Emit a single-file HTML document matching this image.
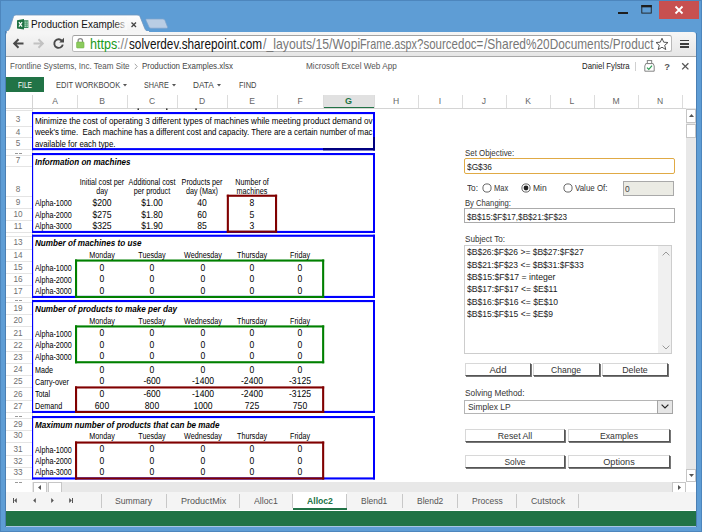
<!DOCTYPE html>
<html><head><meta charset="utf-8"><title>Production Examples.xlsx</title>
<style>
html,body{margin:0;padding:0;}
body{width:702px;height:532px;position:relative;overflow:hidden;background:#5e9dd5;font-family:"Liberation Sans",sans-serif;}
div,svg{position:absolute;box-sizing:border-box;}
.t{position:absolute;white-space:pre;line-height:1;}

.btn{background:#fff;border:1px solid;border-color:#d8d8d8 #555 #555 #d8d8d8;box-shadow:1px 1px 0 #777;}
</style></head>
<body>
<div style="left:0px;top:0px;width:702px;height:532px;border:1px solid #4d86bd;"></div>
<div style="left:659px;top:1px;width:39.5px;height:17.5px;background:#c75050;"></div>
<svg style="left:659px;top:1px" width="40" height="18" viewBox="0 0 40 18"><path d="M16.5 5.5 L23.5 12.5 M23.5 5.5 L16.5 12.5" stroke="#fff" stroke-width="1.8" fill="none"/></svg>
<svg style="left:641px;top:5.4px" width="11.5" height="9" viewBox="0 0 12 10"><rect x="0.5" y="0.5" width="10.5" height="8.5" fill="none" stroke="#1e1e1e" stroke-width="1"/><rect x="0" y="0" width="11.5" height="2.6" fill="#1e1e1e"/></svg>
<div style="left:618px;top:12px;width:10px;height:2px;background:#1e1e1e;"></div>
<svg style="left:0;top:0" width="702" height="34" viewBox="0 0 702 34"><defs><linearGradient id="tg" x1="0" y1="0" x2="0" y2="1"><stop offset="0" stop-color="#fefefe"/><stop offset="1" stop-color="#f3f3f3"/></linearGradient></defs><path d="M146.5 19 L163 19 Q164.5 19 165 20.5 L167.5 27 Q168 28.2 166.5 28.2 L151 28.2 Q149.5 28.2 149 27 L146 20.3 Q145.5 19 146.5 19 Z" fill="#b9cde4" stroke="#7ea4cc" stroke-width="0.7"/><path d="M6 32 L6 31.5 C9 31 9.5 29 10.5 26 L13 18 C13.8 15.6 14.5 15 16.5 15 L137 15 C139 15 139.8 15.6 140.6 18 L144.6 28 C145.6 30.5 146.6 31.5 149.5 31.5 L149.5 32 Z" fill="url(#tg)" stroke="#6f94bd" stroke-width="0.8"/></svg>
<div style="left:6px;top:32px;width:690px;height:25px;background:linear-gradient(#f6f6f6,#e6e6e6);border-bottom:1px solid #a8a8a8;border-radius:3px 3px 0 0;"></div>
<div style="left:7px;top:31px;width:142px;height:2px;background:#f5f5f5;"></div>
<svg style="left:17px;top:19px" width="12" height="11" viewBox="0 0 12 11"><rect x="6" y="1.2" width="5.4" height="7.8" fill="#3a8d60"/><path d="M7.6 2.4h1.3v1.3h-1.3zM9.5 2.4h1.3v1.3h-1.3zM7.6 4.5h1.3v1.3h-1.3zM9.5 4.5h1.3v1.3h-1.3zM7.6 6.6h1.3v1.3h-1.3zM9.5 6.6h1.3v1.3h-1.3z" fill="#b5dcc4"/><path d="M0 1.2 L7 0 L7 10.6 L0 9.4 Z" fill="#1f7244"/><path d="M1.9 3.1 L5.1 7.6 M5.1 3.1 L1.9 7.6" stroke="#fff" stroke-width="1.2"/></svg>
<div style="left:114px;top:17px;width:13px;height:13px;z-index:3;background:linear-gradient(90deg,rgba(250,250,250,0),rgba(250,250,250,.9));"></div>
<svg style="left:130px;top:21px" width="8" height="8" viewBox="0 0 8 8"><path d="M1.5 1.5 L6 6 M6 1.5 L1.5 6" stroke="#444" stroke-width="1.3"/></svg>
<svg style="left:12px;top:37px" width="13" height="13" viewBox="0 0 13 13"><path d="M11.5 6.5 H3 M6.5 2.2 L2.2 6.5 L6.5 10.8" stroke="#4a4a4a" stroke-width="2" fill="none"/></svg>
<svg style="left:32px;top:37px" width="13" height="13" viewBox="0 0 13 13"><path d="M1.5 6.5 H10 M6.5 2.2 L10.8 6.5 L6.5 10.8" stroke="#c2c2c2" stroke-width="2" fill="none"/></svg>
<svg style="left:52px;top:37px" width="13" height="13" viewBox="0 0 13 13"><path d="M10.2 4.2 A4.3 4.3 0 1 0 10.8 7.6" stroke="#4a4a4a" stroke-width="1.9" fill="none"/><path d="M7.2 5.4 L12 5.4 L12 0.8 Z" fill="#4a4a4a"/></svg>
<div style="left:71.5px;top:35px;width:600.5px;height:17px;background:#fff;border:1px solid #b9b9b9;border-radius:2.5px;border-top-color:#a2a2a2;"></div>
<svg style="left:76px;top:37.4px" width="8.6" height="12" viewBox="0 0 9 12"><path d="M2.2 5.5 V3.6 A2.3 2.3 0 0 1 6.8 3.6 V5.5" stroke="#8a8a8a" stroke-width="1.3" fill="none"/><rect x="0.6" y="5" width="7.8" height="6.2" rx="0.8" fill="#8ccb5e" stroke="#6db33f" stroke-width="0.6"/></svg>
<svg style="left:655px;top:37px" width="14" height="14" viewBox="0 0 14 14"><path d="M7 1.2 L8.7 5.2 L13 5.5 L9.7 8.3 L10.8 12.6 L7 10.2 L3.2 12.6 L4.3 8.3 L1 5.5 L5.3 5.2 Z" fill="#fff" stroke="#555" stroke-width="1"/></svg>
<div style="left:680px;top:39.5px;width:9px;height:1.8px;background:#3c3c3c;"></div>
<div style="left:680px;top:42.9px;width:9px;height:1.8px;background:#3c3c3c;"></div>
<div style="left:680px;top:46.3px;width:9px;height:1.8px;background:#3c3c3c;"></div>
<div style="left:6px;top:57px;width:690px;height:469px;background:#fff;"></div>
<svg style="left:134px;top:63px" width="4" height="7" viewBox="0 0 4 7"><path d="M0.8 0.8 L3.2 3.5 L0.8 6.2" stroke="#999" stroke-width="0.9" fill="none"/></svg>
<div style="left:634.5px;top:62px;width:1px;height:9px;background:#d0d0d0;"></div>
<svg style="left:644px;top:60px" width="11" height="12" viewBox="0 0 11 12"><rect x="3.3" y="0.6" width="4.4" height="3" fill="none" stroke="#777" stroke-width="0.9"/><path d="M1.8 3.6 H9.2 L10.2 6 V11.2 H0.8 V6 Z" fill="#fff" stroke="#777" stroke-width="0.9"/><path d="M3 7.6 L4.8 9.4 L8 5.6" stroke="#2f9e55" stroke-width="1.2" fill="none"/></svg>
<svg style="left:681px;top:62px" width="9" height="9" viewBox="0 0 9 9"><path d="M1.2 1.2 L7.4 7.4 M7.4 1.2 L1.2 7.4" stroke="#555" stroke-width="1.3"/></svg>
<div style="left:6px;top:77px;width:38px;height:15.3px;background:#217346;"></div>
<svg style="left:122.5px;top:84.2px" width="4" height="2.4" viewBox="0 0 5 3"><path d="M0 0 H5 L2.5 3 Z" fill="#555"/></svg>
<svg style="left:171.9px;top:84.2px" width="4" height="2.4" viewBox="0 0 5 3"><path d="M0 0 H5 L2.5 3 Z" fill="#555"/></svg>
<svg style="left:217.1px;top:84.2px" width="4" height="2.4" viewBox="0 0 5 3"><path d="M0 0 H5 L2.5 3 Z" fill="#555"/></svg>
<div style="left:6px;top:107.5px;width:680px;height:1px;background:#d4d4d4;"></div>
<div style="left:323px;top:95px;width:51.5px;height:12px;background:#e1e1e1;"></div>
<div style="left:322.5px;top:106.6px;width:52.5px;height:1.2px;background:#217346;"></div>
<div style="left:76.5px;top:95px;width:1px;height:12.5px;background:#dcdcdc;"></div>
<div style="left:126.5px;top:95px;width:1px;height:12.5px;background:#dcdcdc;"></div>
<div style="left:176.5px;top:95px;width:1px;height:12.5px;background:#dcdcdc;"></div>
<div style="left:226.5px;top:95px;width:1px;height:12.5px;background:#dcdcdc;"></div>
<div style="left:276.5px;top:95px;width:1px;height:12.5px;background:#dcdcdc;"></div>
<div style="left:322.5px;top:95px;width:1px;height:12.5px;background:#dcdcdc;"></div>
<div style="left:373.5px;top:95px;width:1px;height:12.5px;background:#dcdcdc;"></div>
<div style="left:417.5px;top:95px;width:1px;height:12.5px;background:#dcdcdc;"></div>
<div style="left:461.5px;top:95px;width:1px;height:12.5px;background:#dcdcdc;"></div>
<div style="left:505.5px;top:95px;width:1px;height:12.5px;background:#dcdcdc;"></div>
<div style="left:549.5px;top:95px;width:1px;height:12.5px;background:#dcdcdc;"></div>
<div style="left:593.5px;top:95px;width:1px;height:12.5px;background:#dcdcdc;"></div>
<div style="left:637.5px;top:95px;width:1px;height:12.5px;background:#dcdcdc;"></div>
<div style="left:681.5px;top:95px;width:1px;height:12.5px;background:#dcdcdc;"></div>
<div style="left:31.5px;top:95px;width:1px;height:384px;background:#d4d4d4;"></div>
<div style="left:6px;top:110px;width:25.5px;height:1px;background:#e4e4e4;"></div>
<div style="left:6px;top:125.5px;width:25.5px;height:1px;background:#e4e4e4;"></div>
<div style="left:6px;top:137px;width:25.5px;height:1px;background:#e4e4e4;"></div>
<div style="left:6px;top:149px;width:25.5px;height:1px;background:#e4e4e4;"></div>
<div style="left:6px;top:154.5px;width:25.5px;height:1px;background:#e4e4e4;"></div>
<div style="left:6px;top:166px;width:25.5px;height:1px;background:#e4e4e4;"></div>
<div style="left:6px;top:195.5px;width:25.5px;height:1px;background:#e4e4e4;"></div>
<div style="left:6px;top:208px;width:25.5px;height:1px;background:#e4e4e4;"></div>
<div style="left:6px;top:220px;width:25.5px;height:1px;background:#e4e4e4;"></div>
<div style="left:6px;top:232px;width:25.5px;height:1px;background:#e4e4e4;"></div>
<div style="left:6px;top:236px;width:25.5px;height:1px;background:#e4e4e4;"></div>
<div style="left:6px;top:248.5px;width:25.5px;height:1px;background:#e4e4e4;"></div>
<div style="left:6px;top:260.5px;width:25.5px;height:1px;background:#e4e4e4;"></div>
<div style="left:6px;top:273px;width:25.5px;height:1px;background:#e4e4e4;"></div>
<div style="left:6px;top:285px;width:25.5px;height:1px;background:#e4e4e4;"></div>
<div style="left:6px;top:297px;width:25.5px;height:1px;background:#e4e4e4;"></div>
<div style="left:6px;top:301.5px;width:25.5px;height:1px;background:#e4e4e4;"></div>
<div style="left:6px;top:314px;width:25.5px;height:1px;background:#e4e4e4;"></div>
<div style="left:6px;top:326px;width:25.5px;height:1px;background:#e4e4e4;"></div>
<div style="left:6px;top:338.5px;width:25.5px;height:1px;background:#e4e4e4;"></div>
<div style="left:6px;top:351px;width:25.5px;height:1px;background:#e4e4e4;"></div>
<div style="left:6px;top:363px;width:25.5px;height:1px;background:#e4e4e4;"></div>
<div style="left:6px;top:375px;width:25.5px;height:1px;background:#e4e4e4;"></div>
<div style="left:6px;top:387px;width:25.5px;height:1px;background:#e4e4e4;"></div>
<div style="left:6px;top:399.5px;width:25.5px;height:1px;background:#e4e4e4;"></div>
<div style="left:6px;top:412px;width:25.5px;height:1px;background:#e4e4e4;"></div>
<div style="left:6px;top:417.5px;width:25.5px;height:1px;background:#e4e4e4;"></div>
<div style="left:6px;top:430px;width:25.5px;height:1px;background:#e4e4e4;"></div>
<div style="left:6px;top:442px;width:25.5px;height:1px;background:#e4e4e4;"></div>
<div style="left:6px;top:454.5px;width:25.5px;height:1px;background:#e4e4e4;"></div>
<div style="left:6px;top:467px;width:25.5px;height:1px;background:#e4e4e4;"></div>
<div style="left:6px;top:479px;width:25.5px;height:1px;background:#e4e4e4;"></div>
<div style="left:14.5px;top:152.6px;width:3px;height:1px;background:#999;"></div>
<div style="left:19px;top:152.6px;width:3px;height:1px;background:#999;"></div>
<div style="left:14.5px;top:299.8px;width:3px;height:1px;background:#999;"></div>
<div style="left:19px;top:299.8px;width:3px;height:1px;background:#999;"></div>
<div style="left:14.5px;top:415.8px;width:3px;height:1px;background:#999;"></div>
<div style="left:19px;top:415.8px;width:3px;height:1px;background:#999;"></div>
<div style="left:14.5px;top:481.8px;width:3px;height:1px;background:#999;"></div>
<div style="left:19px;top:481.8px;width:3px;height:1px;background:#999;"></div>
<svg style="left:0;top:0" width="702" height="532" viewBox="0 0 702 532"><rect x="32" y="112" width="343" height="2.1" fill="#0000ff"/><rect x="32" y="148.1" width="343" height="2.1" fill="#0000ff"/><rect x="32.0" y="112" width="1.15" height="38.2" fill="#0000ff"/><rect x="373" y="112" width="2" height="38.2" fill="#0000ff"/><rect x="32" y="153" width="343" height="2.1" fill="#0000ff"/><rect x="32" y="230.9" width="343" height="2.1" fill="#0000ff"/><rect x="32.0" y="153" width="1.15" height="80" fill="#0000ff"/><rect x="373" y="153" width="2" height="80" fill="#0000ff"/><rect x="32" y="234.7" width="343" height="2.1" fill="#0000ff"/><rect x="32" y="295.9" width="343" height="2.1" fill="#0000ff"/><rect x="32.0" y="234.7" width="1.15" height="63.3" fill="#0000ff"/><rect x="373" y="234.7" width="2" height="63.3" fill="#0000ff"/><rect x="32" y="300" width="343" height="2.1" fill="#0000ff"/><rect x="32" y="410.9" width="343" height="2.1" fill="#0000ff"/><rect x="32.0" y="300" width="1.15" height="113" fill="#0000ff"/><rect x="373" y="300" width="2" height="113" fill="#0000ff"/><rect x="32" y="416" width="343" height="2.1" fill="#0000ff"/><rect x="32" y="477.4" width="343" height="2.1" fill="#0000ff"/><rect x="32.0" y="416" width="1.15" height="63.5" fill="#0000ff"/><rect x="373" y="416" width="2" height="63.5" fill="#0000ff"/><rect x="323" y="148" width="52" height="2.4" fill="#000080"/><rect x="373" y="137" width="2" height="13.4" fill="#000080"/><rect x="226.8" y="194.7" width="50.3" height="2.1" fill="#800000"/><rect x="226.8" y="230.6" width="50.3" height="2.1" fill="#800000"/><rect x="226.8" y="194.7" width="2.1" height="38.0" fill="#800000"/><rect x="275.0" y="194.7" width="2.1" height="38.0" fill="#800000"/><rect x="75" y="259.5" width="249.2" height="2.1" fill="#008000"/><rect x="75" y="295.9" width="249.2" height="2.1" fill="#008000"/><rect x="75" y="259.5" width="2.1" height="38.5" fill="#008000"/><rect x="322.09999999999997" y="259.5" width="2.1" height="38.5" fill="#008000"/><rect x="75" y="325.4" width="249.2" height="2.1" fill="#008000"/><rect x="75" y="361.2" width="249.2" height="2.1" fill="#008000"/><rect x="75" y="325.4" width="2.1" height="37.9" fill="#008000"/><rect x="322.09999999999997" y="325.4" width="2.1" height="37.9" fill="#008000"/><rect x="75" y="386.4" width="249.2" height="2.1" fill="#800000"/><rect x="75" y="410.9" width="249.2" height="2.1" fill="#800000"/><rect x="75" y="386.4" width="2.1" height="26.6" fill="#800000"/><rect x="322.09999999999997" y="386.4" width="2.1" height="26.6" fill="#800000"/><rect x="75" y="441.5" width="249.2" height="2.1" fill="#800000"/><rect x="75" y="477.4" width="249.2" height="2.1" fill="#800000"/><rect x="75" y="441.5" width="2.1" height="38.0" fill="#800000"/><rect x="322.09999999999997" y="441.5" width="2.1" height="38.0" fill="#800000"/><rect x="137.5" y="108.4" width="1.5" height="1.6" fill="#333"/><rect x="166" y="108.4" width="1.5" height="1.6" fill="#333"/><rect x="195.3" y="108.4" width="1.5" height="1.6" fill="#333"/></svg>
<div style="left:686px;top:108px;width:10px;height:374px;background:#e8e8e8;"></div>
<div style="left:686px;top:108.5px;width:10px;height:14px;background:#fff;border:1px solid #c6c6c6;"></div>
<div style="left:686px;top:124px;width:10px;height:14px;background:#fff;border:1px solid #c6c6c6;"></div>
<div style="left:686px;top:468.5px;width:10px;height:13.5px;background:#fff;border:1px solid #c6c6c6;"></div>
<svg style="left:688.5px;top:113.5px" width="5" height="3" viewBox="0 0 5 3"><path d="M0 3 H5 L2.5 0 Z" fill="#555"/></svg>
<svg style="left:688.5px;top:474px" width="5" height="3" viewBox="0 0 5 3"><path d="M0 0 H5 L2.5 3 Z" fill="#555"/></svg>
<div style="left:32px;top:482px;width:654px;height:10px;background:#e8e8e8;"></div>
<div style="left:32.5px;top:482px;width:14px;height:10px;background:#fff;border:1px solid #c6c6c6;border-bottom:none;"></div>
<div style="left:47.5px;top:482px;width:14px;height:10px;background:#fff;border:1px solid #c6c6c6;border-bottom:none;"></div>
<div style="left:672px;top:482px;width:14px;height:10px;background:#fff;border:1px solid #c6c6c6;border-bottom:none;"></div>
<div style="left:686px;top:482px;width:10px;height:10px;background:#fff;"></div>
<svg style="left:38px;top:484.5px" width="3" height="5" viewBox="0 0 3 5"><path d="M3 0 V5 L0 2.5 Z" fill="#555"/></svg>
<svg style="left:677.5px;top:484.5px" width="3" height="5" viewBox="0 0 3 5"><path d="M0 0 V5 L3 2.5 Z" fill="#555"/></svg>
<div style="left:6px;top:492px;width:690px;height:18px;background:#f4f4f4;"></div>
<div style="left:292.5px;top:492px;width:54.5px;height:15.5px;background:#fff;"></div>
<div style="left:292.5px;top:507.5px;width:54.5px;height:2px;background:#217346;"></div>
<div style="left:100.5px;top:494px;width:1px;height:13.5px;background:#c8c8c8;"></div>
<div style="left:165.5px;top:494px;width:1px;height:13.5px;background:#c8c8c8;"></div>
<div style="left:238.8px;top:494px;width:1px;height:13.5px;background:#c8c8c8;"></div>
<div style="left:291.8px;top:494px;width:1px;height:13.5px;background:#c8c8c8;"></div>
<div style="left:346.2px;top:494px;width:1px;height:13.5px;background:#c8c8c8;"></div>
<div style="left:401.7px;top:494px;width:1px;height:13.5px;background:#c8c8c8;"></div>
<div style="left:456.9px;top:494px;width:1px;height:13.5px;background:#c8c8c8;"></div>
<div style="left:516.2px;top:494px;width:1px;height:13.5px;background:#c8c8c8;"></div>
<div style="left:578.4px;top:494px;width:1px;height:13.5px;background:#c8c8c8;"></div>
<svg style="left:14.299999999999999px;top:498.2px" width="3" height="5" viewBox="0 0 2.6 5"><path d="M2.6 0 V5 L0 2.5 Z" fill="#555"/></svg>
<div style="left:13.2px;top:498.2px;width:1px;height:5px;background:#555;"></div>
<svg style="left:32.5px;top:498.2px" width="3" height="5" viewBox="0 0 2.6 5"><path d="M2.6 0 V5 L0 2.5 Z" fill="#555"/></svg>
<svg style="left:50.900000000000006px;top:498.2px" width="3" height="5" viewBox="0 0 2.6 5"><path d="M0 0 V5 L2.6 2.5 Z" fill="#555"/></svg>
<svg style="left:69.10000000000001px;top:498.2px" width="3" height="5" viewBox="0 0 2.6 5"><path d="M0 0 V5 L2.6 2.5 Z" fill="#555"/></svg>
<div style="left:72px;top:498.2px;width:1px;height:5px;background:#555;"></div>
<div style="left:6px;top:511px;width:690px;height:15px;background:#217346;"></div>
<div style="left:5px;top:526px;width:692px;height:1px;background:#a9c6e4;"></div>
<div style="left:5px;top:31px;width:1px;height:496px;background:#4b7fb3;"></div>
<div style="left:696px;top:33px;width:1px;height:494px;background:#4b7fb3;"></div>
<div style="left:464px;top:158px;width:211px;height:15.5px;background:#fff;border:1.5px solid #e0aa45;border-radius:2px;"></div>
<svg style="left:481.8px;top:182.7px" width="10" height="10" viewBox="0 0 10 10"><circle cx="5" cy="5" r="4.1" fill="#fff" stroke="#555" stroke-width="0.9"/></svg>
<svg style="left:521.4px;top:182.7px" width="10" height="10" viewBox="0 0 10 10"><circle cx="5" cy="5" r="4.1" fill="#fff" stroke="#555" stroke-width="0.9"/><circle cx="5" cy="5" r="2.4" fill="#222"/></svg>
<svg style="left:563.4px;top:182.7px" width="10" height="10" viewBox="0 0 10 10"><circle cx="5" cy="5" r="4.1" fill="#fff" stroke="#555" stroke-width="0.9"/></svg>
<div style="left:623px;top:181px;width:51px;height:14.8px;background:#ebebe4;border:1px solid #a9a9a9;"></div>
<div style="left:464px;top:208px;width:211px;height:14.8px;background:#fff;border:1px solid #ababab;"></div>
<div style="left:464px;top:245px;width:208px;height:109px;background:#fff;border:1px solid #cdcdcd;"></div>
<div style="left:658px;top:246px;width:13px;height:107px;background:#f0f0f0;"></div>
<svg style="left:661.5px;top:250.5px" width="8" height="5" viewBox="0 0 8 5"><path d="M0.6 4.4 L4 1 L7.4 4.4" stroke="#999" stroke-width="1" fill="none"/></svg>
<svg style="left:661.5px;top:345px" width="8" height="5" viewBox="0 0 8 5"><path d="M0.6 0.6 L4 4 L7.4 0.6" stroke="#999" stroke-width="1" fill="none"/></svg>
<div class="btn" style="left:465px;top:362.6px;width:65.5px;height:13.5px;"></div>
<div class="btn" style="left:533px;top:362.6px;width:66.5px;height:13.5px;"></div>
<div class="btn" style="left:602px;top:362.6px;width:66px;height:13.5px;"></div>
<div style="left:464px;top:399.5px;width:208.5px;height:14px;background:#fff;border:1px solid #b5b5b5;"></div>
<div style="left:657px;top:399.5px;width:15.5px;height:14px;background:#e6e6e6;border:1px solid #a5a5a5;"></div>
<svg style="left:660.5px;top:404px" width="8" height="5" viewBox="0 0 8 5"><path d="M0.6 0.6 L4 4 L7.4 0.6" stroke="#222" stroke-width="1.2" fill="none"/></svg>
<div class="btn" style="left:465px;top:429.2px;width:100px;height:13.2px;"></div>
<div class="btn" style="left:568.3px;top:429.2px;width:101.3px;height:13.2px;"></div>
<div class="btn" style="left:465px;top:454.8px;width:100px;height:13.2px;"></div>
<div class="btn" style="left:568.3px;top:454.8px;width:101.3px;height:13.2px;"></div>
<span class="t" style="font-size:11px;color:#111;top:19px;left:31.2px;transform-origin:0 0;transform:scaleX(0.9043);">Production Examples</span>
<span class="t" style="font-size:13.9px;color:#1a9b1a;top:38px;left:89.7px;transform-origin:0 0;transform:scaleX(0.9029);">https</span>
<span class="t" style="font-size:13.9px;color:#888;top:38px;left:117.2px;transform-origin:0 0;transform:scaleX(0.9328);">://</span>
<span class="t" style="font-size:13.9px;color:#111;top:38px;left:128.5px;transform-origin:0 0;transform:scaleX(0.8458);">solverdev.sharepoint.com</span>
<span class="t" style="font-size:13.9px;color:#777;top:38px;left:262.6px;transform-origin:0 0;transform:scaleX(0.8823);">/_layouts/15/Wopi</span>
<span class="t" style="font-size:13.9px;color:#777;top:38px;left:360px;transform-origin:0 0;transform:scaleX(0.7772);">Frame.aspx</span>
<span class="t" style="font-size:13.9px;color:#777;top:38px;left:417px;transform-origin:0 0;transform:scaleX(0.8294);">?sourcedoc=</span>
<span class="t" style="font-size:13.9px;color:#777;top:38px;left:484px;transform-origin:0 0;transform:scaleX(0.8632);">/Shared</span>
<span class="t" style="font-size:13.9px;color:#777;top:38px;left:526px;transform-origin:0 0;transform:scaleX(0.8512);">%20Documents/Product</span>
<span class="t" style="font-size:8.6px;color:#555;top:62px;left:10.4px;transform-origin:0 0;transform:scaleX(0.9355);">Frontline Systems, Inc. Team Site</span>
<span class="t" style="font-size:8.6px;color:#444;top:62px;left:142.4px;transform-origin:0 0;transform:scaleX(0.9247);">Production Examples.xlsx</span>
<span class="t" style="font-size:8.6px;color:#555;top:62px;left:305.9px;transform-origin:0 0;transform:scaleX(0.9520);">Microsoft Excel Web App</span>
<span class="t" style="font-size:8.6px;color:#222;top:62px;left:581.5px;transform-origin:0 0;transform:scaleX(0.9078);">Daniel Fylstra</span>
<span class="t" style="font-size:9.4px;color:#555;top:62px;font-weight:bold;left:667px;transform-origin:0 0;transform:translateX(-50%);">?</span>
<span class="t" style="font-size:9.2px;color:#fff;top:81px;left:18.3px;transform-origin:0 0;transform:scaleX(0.7214);">FILE</span>
<span class="t" style="font-size:9.2px;color:#444;top:81px;left:55.8px;transform-origin:0 0;transform:scaleX(0.8183);">EDIT WORKBOOK</span>
<span class="t" style="font-size:9.2px;color:#444;top:81px;left:144.4px;transform-origin:0 0;transform:scaleX(0.7866);">SHARE</span>
<span class="t" style="font-size:9.2px;color:#444;top:81px;left:193.4px;transform-origin:0 0;transform:scaleX(0.8989);">DATA</span>
<span class="t" style="font-size:9.2px;color:#444;top:81px;left:238.7px;transform-origin:0 0;transform:scaleX(0.8163);">FIND</span>
<span class="t" style="font-size:9px;color:#666;top:97px;left:54.5px;transform-origin:0 0;transform:scaleX(0.9500) translateX(-50%);">A</span>
<span class="t" style="font-size:9px;color:#666;top:97px;left:102.0px;transform-origin:0 0;transform:scaleX(0.9500) translateX(-50%);">B</span>
<span class="t" style="font-size:9px;color:#666;top:97px;left:152.0px;transform-origin:0 0;transform:scaleX(0.9500) translateX(-50%);">C</span>
<span class="t" style="font-size:9px;color:#666;top:97px;left:202.0px;transform-origin:0 0;transform:scaleX(0.9500) translateX(-50%);">D</span>
<span class="t" style="font-size:9px;color:#666;top:97px;left:252.0px;transform-origin:0 0;transform:scaleX(0.9500) translateX(-50%);">E</span>
<span class="t" style="font-size:9px;color:#666;top:97px;left:300.0px;transform-origin:0 0;transform:scaleX(0.9500) translateX(-50%);">F</span>
<span class="t" style="font-size:9px;color:#217346;top:97px;font-weight:bold;left:348.5px;transform-origin:0 0;transform:translateX(-50%);">G</span>
<span class="t" style="font-size:9px;color:#666;top:97px;left:396.0px;transform-origin:0 0;transform:scaleX(0.9500) translateX(-50%);">H</span>
<span class="t" style="font-size:9px;color:#666;top:97px;left:440.0px;transform-origin:0 0;transform:scaleX(0.9500) translateX(-50%);">I</span>
<span class="t" style="font-size:9px;color:#666;top:97px;left:484.0px;transform-origin:0 0;transform:scaleX(0.9500) translateX(-50%);">J</span>
<span class="t" style="font-size:9px;color:#666;top:97px;left:528.0px;transform-origin:0 0;transform:scaleX(0.9500) translateX(-50%);">K</span>
<span class="t" style="font-size:9px;color:#666;top:97px;left:572.0px;transform-origin:0 0;transform:scaleX(0.9500) translateX(-50%);">L</span>
<span class="t" style="font-size:9px;color:#666;top:97px;left:616.0px;transform-origin:0 0;transform:scaleX(0.9500) translateX(-50%);">M</span>
<span class="t" style="font-size:9px;color:#666;top:97px;left:660.0px;transform-origin:0 0;transform:scaleX(0.9500) translateX(-50%);">N</span>
<span class="t" style="font-size:8.8px;color:#707070;top:115px;left:18.3px;transform-origin:0 0;transform:scaleX(0.9300) translateX(-50%);">3</span>
<span class="t" style="font-size:8.8px;color:#707070;top:128px;left:18.3px;transform-origin:0 0;transform:scaleX(0.9300) translateX(-50%);">4</span>
<span class="t" style="font-size:8.8px;color:#707070;top:139px;left:18.3px;transform-origin:0 0;transform:scaleX(0.9300) translateX(-50%);">5</span>
<span class="t" style="font-size:8.8px;color:#707070;top:156px;left:18.3px;transform-origin:0 0;transform:scaleX(0.9300) translateX(-50%);">7</span>
<span class="t" style="font-size:8.8px;color:#707070;top:185px;left:18.3px;transform-origin:0 0;transform:scaleX(0.9300) translateX(-50%);">8</span>
<span class="t" style="font-size:8.8px;color:#707070;top:198px;left:18.3px;transform-origin:0 0;transform:scaleX(0.9300) translateX(-50%);">9</span>
<span class="t" style="font-size:8.8px;color:#707070;top:210px;left:18.3px;transform-origin:0 0;transform:scaleX(0.9300) translateX(-50%);">10</span>
<span class="t" style="font-size:8.8px;color:#707070;top:222px;left:18.3px;transform-origin:0 0;transform:scaleX(0.9300) translateX(-50%);">11</span>
<span class="t" style="font-size:8.8px;color:#707070;top:238px;left:18.3px;transform-origin:0 0;transform:scaleX(0.9300) translateX(-50%);">13</span>
<span class="t" style="font-size:8.8px;color:#707070;top:251px;left:18.3px;transform-origin:0 0;transform:scaleX(0.9300) translateX(-50%);">14</span>
<span class="t" style="font-size:8.8px;color:#707070;top:263px;left:18.3px;transform-origin:0 0;transform:scaleX(0.9300) translateX(-50%);">15</span>
<span class="t" style="font-size:8.8px;color:#707070;top:275px;left:18.3px;transform-origin:0 0;transform:scaleX(0.9300) translateX(-50%);">16</span>
<span class="t" style="font-size:8.8px;color:#707070;top:287px;left:18.3px;transform-origin:0 0;transform:scaleX(0.9300) translateX(-50%);">17</span>
<span class="t" style="font-size:8.8px;color:#707070;top:304px;left:18.3px;transform-origin:0 0;transform:scaleX(0.9300) translateX(-50%);">19</span>
<span class="t" style="font-size:8.8px;color:#707070;top:316px;left:18.3px;transform-origin:0 0;transform:scaleX(0.9300) translateX(-50%);">20</span>
<span class="t" style="font-size:8.8px;color:#707070;top:329px;left:18.3px;transform-origin:0 0;transform:scaleX(0.9300) translateX(-50%);">21</span>
<span class="t" style="font-size:8.8px;color:#707070;top:341px;left:18.3px;transform-origin:0 0;transform:scaleX(0.9300) translateX(-50%);">22</span>
<span class="t" style="font-size:8.8px;color:#707070;top:353px;left:18.3px;transform-origin:0 0;transform:scaleX(0.9300) translateX(-50%);">23</span>
<span class="t" style="font-size:8.8px;color:#707070;top:365px;left:18.3px;transform-origin:0 0;transform:scaleX(0.9300) translateX(-50%);">24</span>
<span class="t" style="font-size:8.8px;color:#707070;top:377px;left:18.3px;transform-origin:0 0;transform:scaleX(0.9300) translateX(-50%);">25</span>
<span class="t" style="font-size:8.8px;color:#707070;top:390px;left:18.3px;transform-origin:0 0;transform:scaleX(0.9300) translateX(-50%);">26</span>
<span class="t" style="font-size:8.8px;color:#707070;top:402px;left:18.3px;transform-origin:0 0;transform:scaleX(0.9300) translateX(-50%);">27</span>
<span class="t" style="font-size:8.8px;color:#707070;top:420px;left:18.3px;transform-origin:0 0;transform:scaleX(0.9300) translateX(-50%);">29</span>
<span class="t" style="font-size:8.8px;color:#707070;top:431px;left:18.3px;transform-origin:0 0;transform:scaleX(0.9300) translateX(-50%);">30</span>
<span class="t" style="font-size:8.8px;color:#707070;top:445px;left:18.3px;transform-origin:0 0;transform:scaleX(0.9300) translateX(-50%);">31</span>
<span class="t" style="font-size:8.8px;color:#707070;top:457px;left:18.3px;transform-origin:0 0;transform:scaleX(0.9300) translateX(-50%);">32</span>
<span class="t" style="font-size:8.8px;color:#707070;top:468px;left:18.3px;transform-origin:0 0;transform:scaleX(0.9300) translateX(-50%);">33</span>
<span class="t" style="font-size:8.9px;color:#000;top:117px;left:35px;transform-origin:0 0;transform:scaleX(0.9150);">Minimize the cost of operating 3 different types of machines while meeting product demand ov</span>
<span class="t" style="font-size:8.9px;color:#000;top:128px;left:35px;transform-origin:0 0;transform:scaleX(0.8880);">week&#x27;s time.  Each machine has a different cost and capacity. There are a certain number of mac</span>
<span class="t" style="font-size:8.9px;color:#000;top:140px;left:35px;transform-origin:0 0;transform:scaleX(0.8819);">available for each type.</span>
<span class="t" style="font-size:8.9px;color:#000;top:158px;font-weight:bold;font-style:italic;left:35px;transform-origin:0 0;transform:scaleX(0.9049);">Information on machines</span>
<span class="t" style="font-size:8.9px;color:#000;top:239px;font-weight:bold;font-style:italic;left:35px;transform-origin:0 0;transform:scaleX(0.9150);">Number of machines to use</span>
<span class="t" style="font-size:8.9px;color:#000;top:305px;font-weight:bold;font-style:italic;left:35px;transform-origin:0 0;transform:scaleX(0.9170);">Number of products to make per day</span>
<span class="t" style="font-size:8.9px;color:#000;top:421px;font-weight:bold;font-style:italic;left:35px;transform-origin:0 0;transform:scaleX(0.9125);">Maximum number of products that can be made</span>
<span class="t" style="font-size:8.4px;color:#000;top:178px;left:102px;transform-origin:0 0;transform:scaleX(0.8600) translateX(-50%);">Initial cost per</span>
<span class="t" style="font-size:8.4px;color:#000;top:187px;left:102px;transform-origin:0 0;transform:scaleX(0.8600) translateX(-50%);">day</span>
<span class="t" style="font-size:8.4px;color:#000;top:178px;left:152px;transform-origin:0 0;transform:scaleX(0.8600) translateX(-50%);">Additional cost</span>
<span class="t" style="font-size:8.4px;color:#000;top:187px;left:152px;transform-origin:0 0;transform:scaleX(0.8600) translateX(-50%);">per product</span>
<span class="t" style="font-size:8.4px;color:#000;top:178px;left:202px;transform-origin:0 0;transform:scaleX(0.8600) translateX(-50%);">Products per</span>
<span class="t" style="font-size:8.4px;color:#000;top:187px;left:202px;transform-origin:0 0;transform:scaleX(0.8600) translateX(-50%);">day (Max)</span>
<span class="t" style="font-size:8.4px;color:#000;top:178px;left:252.3px;transform-origin:0 0;transform:scaleX(0.8600) translateX(-50%);">Number of</span>
<span class="t" style="font-size:8.4px;color:#000;top:187px;left:252px;transform-origin:0 0;transform:scaleX(0.8600) translateX(-50%);">machines</span>
<span class="t" style="font-size:9px;color:#000;top:199px;left:35px;transform-origin:0 0;transform:scaleX(0.8000);">Alpha-1000</span>
<span class="t" style="font-size:10px;color:#000;top:198px;left:102px;transform-origin:0 0;transform:scaleX(0.8600) translateX(-50%) rotate(0.03deg);">$200</span>
<span class="t" style="font-size:10px;color:#000;top:198px;left:152px;transform-origin:0 0;transform:scaleX(0.8600) translateX(-50%) rotate(0.03deg);">$1.00</span>
<span class="t" style="font-size:10px;color:#000;top:198px;left:202px;transform-origin:0 0;transform:scaleX(0.8600) translateX(-50%) rotate(0.03deg);">40</span>
<span class="t" style="font-size:10px;color:#000;top:198px;left:252.2px;transform-origin:0 0;transform:scaleX(0.8600) translateX(-50%) rotate(0.03deg);">8</span>
<span class="t" style="font-size:9px;color:#000;top:211px;left:35px;transform-origin:0 0;transform:scaleX(0.8000);">Alpha-2000</span>
<span class="t" style="font-size:10px;color:#000;top:210px;left:102px;transform-origin:0 0;transform:scaleX(0.8600) translateX(-50%) rotate(0.03deg);">$275</span>
<span class="t" style="font-size:10px;color:#000;top:210px;left:152px;transform-origin:0 0;transform:scaleX(0.8600) translateX(-50%) rotate(0.03deg);">$1.80</span>
<span class="t" style="font-size:10px;color:#000;top:210px;left:202px;transform-origin:0 0;transform:scaleX(0.8600) translateX(-50%) rotate(0.03deg);">60</span>
<span class="t" style="font-size:10px;color:#000;top:210px;left:252.2px;transform-origin:0 0;transform:scaleX(0.8600) translateX(-50%) rotate(0.03deg);">5</span>
<span class="t" style="font-size:9px;color:#000;top:222px;left:35px;transform-origin:0 0;transform:scaleX(0.8000);">Alpha-3000</span>
<span class="t" style="font-size:10px;color:#000;top:221px;left:102px;transform-origin:0 0;transform:scaleX(0.8600) translateX(-50%) rotate(0.03deg);">$325</span>
<span class="t" style="font-size:10px;color:#000;top:221px;left:152px;transform-origin:0 0;transform:scaleX(0.8600) translateX(-50%) rotate(0.03deg);">$1.90</span>
<span class="t" style="font-size:10px;color:#000;top:221px;left:202px;transform-origin:0 0;transform:scaleX(0.8600) translateX(-50%) rotate(0.03deg);">85</span>
<span class="t" style="font-size:10px;color:#000;top:221px;left:252.2px;transform-origin:0 0;transform:scaleX(0.8600) translateX(-50%) rotate(0.03deg);">3</span>
<span class="t" style="font-size:8.4px;color:#000;top:251px;left:101.8px;transform-origin:0 0;transform:scaleX(0.8600) translateX(-50%);">Monday</span>
<span class="t" style="font-size:8.4px;color:#000;top:251px;left:152px;transform-origin:0 0;transform:scaleX(0.8600) translateX(-50%);">Tuesday</span>
<span class="t" style="font-size:8.4px;color:#000;top:251px;left:202.6px;transform-origin:0 0;transform:scaleX(0.8600) translateX(-50%);">Wednesday</span>
<span class="t" style="font-size:8.4px;color:#000;top:251px;left:252.2px;transform-origin:0 0;transform:scaleX(0.8600) translateX(-50%);">Thursday</span>
<span class="t" style="font-size:8.4px;color:#000;top:251px;left:300px;transform-origin:0 0;transform:scaleX(0.8600) translateX(-50%);">Friday</span>
<span class="t" style="font-size:9px;color:#000;top:264px;left:35px;transform-origin:0 0;transform:scaleX(0.8000);">Alpha-1000</span>
<span class="t" style="font-size:10px;color:#000;top:263px;left:101.8px;transform-origin:0 0;transform:scaleX(0.8600) translateX(-50%) rotate(0.03deg);">0</span>
<span class="t" style="font-size:10px;color:#000;top:263px;left:152px;transform-origin:0 0;transform:scaleX(0.8600) translateX(-50%) rotate(0.03deg);">0</span>
<span class="t" style="font-size:10px;color:#000;top:263px;left:202.6px;transform-origin:0 0;transform:scaleX(0.8600) translateX(-50%) rotate(0.03deg);">0</span>
<span class="t" style="font-size:10px;color:#000;top:263px;left:252.2px;transform-origin:0 0;transform:scaleX(0.8600) translateX(-50%) rotate(0.03deg);">0</span>
<span class="t" style="font-size:10px;color:#000;top:263px;left:300px;transform-origin:0 0;transform:scaleX(0.8600) translateX(-50%) rotate(0.03deg);">0</span>
<span class="t" style="font-size:9px;color:#000;top:276px;left:35px;transform-origin:0 0;transform:scaleX(0.8000);">Alpha-2000</span>
<span class="t" style="font-size:10px;color:#000;top:274px;left:101.8px;transform-origin:0 0;transform:scaleX(0.8600) translateX(-50%) rotate(0.03deg);">0</span>
<span class="t" style="font-size:10px;color:#000;top:274px;left:152px;transform-origin:0 0;transform:scaleX(0.8600) translateX(-50%) rotate(0.03deg);">0</span>
<span class="t" style="font-size:10px;color:#000;top:274px;left:202.6px;transform-origin:0 0;transform:scaleX(0.8600) translateX(-50%) rotate(0.03deg);">0</span>
<span class="t" style="font-size:10px;color:#000;top:274px;left:252.2px;transform-origin:0 0;transform:scaleX(0.8600) translateX(-50%) rotate(0.03deg);">0</span>
<span class="t" style="font-size:10px;color:#000;top:274px;left:300px;transform-origin:0 0;transform:scaleX(0.8600) translateX(-50%) rotate(0.03deg);">0</span>
<span class="t" style="font-size:9px;color:#000;top:287px;left:35px;transform-origin:0 0;transform:scaleX(0.8000);">Alpha-3000</span>
<span class="t" style="font-size:10px;color:#000;top:286px;left:101.8px;transform-origin:0 0;transform:scaleX(0.8600) translateX(-50%) rotate(0.03deg);">0</span>
<span class="t" style="font-size:10px;color:#000;top:286px;left:152px;transform-origin:0 0;transform:scaleX(0.8600) translateX(-50%) rotate(0.03deg);">0</span>
<span class="t" style="font-size:10px;color:#000;top:286px;left:202.6px;transform-origin:0 0;transform:scaleX(0.8600) translateX(-50%) rotate(0.03deg);">0</span>
<span class="t" style="font-size:10px;color:#000;top:286px;left:252.2px;transform-origin:0 0;transform:scaleX(0.8600) translateX(-50%) rotate(0.03deg);">0</span>
<span class="t" style="font-size:10px;color:#000;top:286px;left:300px;transform-origin:0 0;transform:scaleX(0.8600) translateX(-50%) rotate(0.03deg);">0</span>
<span class="t" style="font-size:8.4px;color:#000;top:317px;left:101.8px;transform-origin:0 0;transform:scaleX(0.8600) translateX(-50%);">Monday</span>
<span class="t" style="font-size:8.4px;color:#000;top:317px;left:152px;transform-origin:0 0;transform:scaleX(0.8600) translateX(-50%);">Tuesday</span>
<span class="t" style="font-size:8.4px;color:#000;top:317px;left:202.6px;transform-origin:0 0;transform:scaleX(0.8600) translateX(-50%);">Wednesday</span>
<span class="t" style="font-size:8.4px;color:#000;top:317px;left:252.2px;transform-origin:0 0;transform:scaleX(0.8600) translateX(-50%);">Thursday</span>
<span class="t" style="font-size:8.4px;color:#000;top:317px;left:300px;transform-origin:0 0;transform:scaleX(0.8600) translateX(-50%);">Friday</span>
<span class="t" style="font-size:9px;color:#000;top:330px;left:35px;transform-origin:0 0;transform:scaleX(0.8000);">Alpha-1000</span>
<span class="t" style="font-size:10px;color:#000;top:328px;left:101.8px;transform-origin:0 0;transform:scaleX(0.8600) translateX(-50%) rotate(0.03deg);">0</span>
<span class="t" style="font-size:10px;color:#000;top:328px;left:152px;transform-origin:0 0;transform:scaleX(0.8600) translateX(-50%) rotate(0.03deg);">0</span>
<span class="t" style="font-size:10px;color:#000;top:328px;left:202.6px;transform-origin:0 0;transform:scaleX(0.8600) translateX(-50%) rotate(0.03deg);">0</span>
<span class="t" style="font-size:10px;color:#000;top:328px;left:252.2px;transform-origin:0 0;transform:scaleX(0.8600) translateX(-50%) rotate(0.03deg);">0</span>
<span class="t" style="font-size:10px;color:#000;top:328px;left:300px;transform-origin:0 0;transform:scaleX(0.8600) translateX(-50%) rotate(0.03deg);">0</span>
<span class="t" style="font-size:9px;color:#000;top:341px;left:35px;transform-origin:0 0;transform:scaleX(0.8000);">Alpha-2000</span>
<span class="t" style="font-size:10px;color:#000;top:340px;left:101.8px;transform-origin:0 0;transform:scaleX(0.8600) translateX(-50%) rotate(0.03deg);">0</span>
<span class="t" style="font-size:10px;color:#000;top:340px;left:152px;transform-origin:0 0;transform:scaleX(0.8600) translateX(-50%) rotate(0.03deg);">0</span>
<span class="t" style="font-size:10px;color:#000;top:340px;left:202.6px;transform-origin:0 0;transform:scaleX(0.8600) translateX(-50%) rotate(0.03deg);">0</span>
<span class="t" style="font-size:10px;color:#000;top:340px;left:252.2px;transform-origin:0 0;transform:scaleX(0.8600) translateX(-50%) rotate(0.03deg);">0</span>
<span class="t" style="font-size:10px;color:#000;top:340px;left:300px;transform-origin:0 0;transform:scaleX(0.8600) translateX(-50%) rotate(0.03deg);">0</span>
<span class="t" style="font-size:9px;color:#000;top:353px;left:35px;transform-origin:0 0;transform:scaleX(0.8000);">Alpha-3000</span>
<span class="t" style="font-size:10px;color:#000;top:351px;left:101.8px;transform-origin:0 0;transform:scaleX(0.8600) translateX(-50%) rotate(0.03deg);">0</span>
<span class="t" style="font-size:10px;color:#000;top:351px;left:152px;transform-origin:0 0;transform:scaleX(0.8600) translateX(-50%) rotate(0.03deg);">0</span>
<span class="t" style="font-size:10px;color:#000;top:351px;left:202.6px;transform-origin:0 0;transform:scaleX(0.8600) translateX(-50%) rotate(0.03deg);">0</span>
<span class="t" style="font-size:10px;color:#000;top:351px;left:252.2px;transform-origin:0 0;transform:scaleX(0.8600) translateX(-50%) rotate(0.03deg);">0</span>
<span class="t" style="font-size:10px;color:#000;top:351px;left:300px;transform-origin:0 0;transform:scaleX(0.8600) translateX(-50%) rotate(0.03deg);">0</span>
<span class="t" style="font-size:9px;color:#000;top:366px;left:35px;transform-origin:0 0;transform:scaleX(0.8000);">Made</span>
<span class="t" style="font-size:10px;color:#000;top:365px;left:101.8px;transform-origin:0 0;transform:scaleX(0.8600) translateX(-50%) rotate(0.03deg);">0</span>
<span class="t" style="font-size:10px;color:#000;top:365px;left:152px;transform-origin:0 0;transform:scaleX(0.8600) translateX(-50%) rotate(0.03deg);">0</span>
<span class="t" style="font-size:10px;color:#000;top:365px;left:202.6px;transform-origin:0 0;transform:scaleX(0.8600) translateX(-50%) rotate(0.03deg);">0</span>
<span class="t" style="font-size:10px;color:#000;top:365px;left:252.2px;transform-origin:0 0;transform:scaleX(0.8600) translateX(-50%) rotate(0.03deg);">0</span>
<span class="t" style="font-size:10px;color:#000;top:365px;left:300px;transform-origin:0 0;transform:scaleX(0.8600) translateX(-50%) rotate(0.03deg);">0</span>
<span class="t" style="font-size:9px;color:#000;top:378px;left:35px;transform-origin:0 0;transform:scaleX(0.8000);">Carry-over</span>
<span class="t" style="font-size:10px;color:#000;top:376px;left:101.8px;transform-origin:0 0;transform:scaleX(0.8600) translateX(-50%) rotate(0.03deg);">0</span>
<span class="t" style="font-size:10px;color:#000;top:376px;left:152px;transform-origin:0 0;transform:scaleX(0.8600) translateX(-50%) rotate(0.03deg);">-600</span>
<span class="t" style="font-size:10px;color:#000;top:376px;left:202.6px;transform-origin:0 0;transform:scaleX(0.8600) translateX(-50%) rotate(0.03deg);">-1400</span>
<span class="t" style="font-size:10px;color:#000;top:376px;left:252.2px;transform-origin:0 0;transform:scaleX(0.8600) translateX(-50%) rotate(0.03deg);">-2400</span>
<span class="t" style="font-size:10px;color:#000;top:376px;left:300px;transform-origin:0 0;transform:scaleX(0.8600) translateX(-50%) rotate(0.03deg);">-3125</span>
<span class="t" style="font-size:9px;color:#000;top:390px;left:35px;transform-origin:0 0;transform:scaleX(0.8000);">Total</span>
<span class="t" style="font-size:10px;color:#000;top:389px;left:101.8px;transform-origin:0 0;transform:scaleX(0.8600) translateX(-50%) rotate(0.03deg);">0</span>
<span class="t" style="font-size:10px;color:#000;top:389px;left:152px;transform-origin:0 0;transform:scaleX(0.8600) translateX(-50%) rotate(0.03deg);">-600</span>
<span class="t" style="font-size:10px;color:#000;top:389px;left:202.6px;transform-origin:0 0;transform:scaleX(0.8600) translateX(-50%) rotate(0.03deg);">-1400</span>
<span class="t" style="font-size:10px;color:#000;top:389px;left:252.2px;transform-origin:0 0;transform:scaleX(0.8600) translateX(-50%) rotate(0.03deg);">-2400</span>
<span class="t" style="font-size:10px;color:#000;top:389px;left:300px;transform-origin:0 0;transform:scaleX(0.8600) translateX(-50%) rotate(0.03deg);">-3125</span>
<span class="t" style="font-size:9px;color:#000;top:402px;left:35px;transform-origin:0 0;transform:scaleX(0.8000);">Demand</span>
<span class="t" style="font-size:10px;color:#000;top:401px;left:101.8px;transform-origin:0 0;transform:scaleX(0.8600) translateX(-50%) rotate(0.03deg);">600</span>
<span class="t" style="font-size:10px;color:#000;top:401px;left:152px;transform-origin:0 0;transform:scaleX(0.8600) translateX(-50%) rotate(0.03deg);">800</span>
<span class="t" style="font-size:10px;color:#000;top:401px;left:202.6px;transform-origin:0 0;transform:scaleX(0.8600) translateX(-50%) rotate(0.03deg);">1000</span>
<span class="t" style="font-size:10px;color:#000;top:401px;left:252.2px;transform-origin:0 0;transform:scaleX(0.8600) translateX(-50%) rotate(0.03deg);">725</span>
<span class="t" style="font-size:10px;color:#000;top:401px;left:300px;transform-origin:0 0;transform:scaleX(0.8600) translateX(-50%) rotate(0.03deg);">750</span>
<span class="t" style="font-size:8.4px;color:#000;top:432px;left:101.8px;transform-origin:0 0;transform:scaleX(0.8600) translateX(-50%);">Monday</span>
<span class="t" style="font-size:8.4px;color:#000;top:432px;left:152px;transform-origin:0 0;transform:scaleX(0.8600) translateX(-50%);">Tuesday</span>
<span class="t" style="font-size:8.4px;color:#000;top:432px;left:202.6px;transform-origin:0 0;transform:scaleX(0.8600) translateX(-50%);">Wednesday</span>
<span class="t" style="font-size:8.4px;color:#000;top:432px;left:252.2px;transform-origin:0 0;transform:scaleX(0.8600) translateX(-50%);">Thursday</span>
<span class="t" style="font-size:8.4px;color:#000;top:432px;left:300px;transform-origin:0 0;transform:scaleX(0.8600) translateX(-50%);">Friday</span>
<span class="t" style="font-size:9px;color:#000;top:446px;left:35px;transform-origin:0 0;transform:scaleX(0.8000);">Alpha-1000</span>
<span class="t" style="font-size:10px;color:#000;top:444px;left:101.8px;transform-origin:0 0;transform:scaleX(0.8600) translateX(-50%) rotate(0.03deg);">0</span>
<span class="t" style="font-size:10px;color:#000;top:444px;left:152px;transform-origin:0 0;transform:scaleX(0.8600) translateX(-50%) rotate(0.03deg);">0</span>
<span class="t" style="font-size:10px;color:#000;top:444px;left:202.6px;transform-origin:0 0;transform:scaleX(0.8600) translateX(-50%) rotate(0.03deg);">0</span>
<span class="t" style="font-size:10px;color:#000;top:444px;left:252.2px;transform-origin:0 0;transform:scaleX(0.8600) translateX(-50%) rotate(0.03deg);">0</span>
<span class="t" style="font-size:10px;color:#000;top:444px;left:300px;transform-origin:0 0;transform:scaleX(0.8600) translateX(-50%) rotate(0.03deg);">0</span>
<span class="t" style="font-size:9px;color:#000;top:457px;left:35px;transform-origin:0 0;transform:scaleX(0.8000);">Alpha-2000</span>
<span class="t" style="font-size:10px;color:#000;top:456px;left:101.8px;transform-origin:0 0;transform:scaleX(0.8600) translateX(-50%) rotate(0.03deg);">0</span>
<span class="t" style="font-size:10px;color:#000;top:456px;left:152px;transform-origin:0 0;transform:scaleX(0.8600) translateX(-50%) rotate(0.03deg);">0</span>
<span class="t" style="font-size:10px;color:#000;top:456px;left:202.6px;transform-origin:0 0;transform:scaleX(0.8600) translateX(-50%) rotate(0.03deg);">0</span>
<span class="t" style="font-size:10px;color:#000;top:456px;left:252.2px;transform-origin:0 0;transform:scaleX(0.8600) translateX(-50%) rotate(0.03deg);">0</span>
<span class="t" style="font-size:10px;color:#000;top:456px;left:300px;transform-origin:0 0;transform:scaleX(0.8600) translateX(-50%) rotate(0.03deg);">0</span>
<span class="t" style="font-size:9px;color:#000;top:468px;left:35px;transform-origin:0 0;transform:scaleX(0.8000);">Alpha-3000</span>
<span class="t" style="font-size:10px;color:#000;top:467px;left:101.8px;transform-origin:0 0;transform:scaleX(0.8600) translateX(-50%) rotate(0.03deg);">0</span>
<span class="t" style="font-size:10px;color:#000;top:467px;left:152px;transform-origin:0 0;transform:scaleX(0.8600) translateX(-50%) rotate(0.03deg);">0</span>
<span class="t" style="font-size:10px;color:#000;top:467px;left:202.6px;transform-origin:0 0;transform:scaleX(0.8600) translateX(-50%) rotate(0.03deg);">0</span>
<span class="t" style="font-size:10px;color:#000;top:467px;left:252.2px;transform-origin:0 0;transform:scaleX(0.8600) translateX(-50%) rotate(0.03deg);">0</span>
<span class="t" style="font-size:10px;color:#000;top:467px;left:300px;transform-origin:0 0;transform:scaleX(0.8600) translateX(-50%) rotate(0.03deg);">0</span>
<span class="t" style="font-size:9px;color:#555;top:497px;left:114.8px;transform-origin:0 0;transform:scaleX(0.9632);">Summary</span>
<span class="t" style="font-size:9px;color:#555;top:497px;left:180.7px;transform-origin:0 0;transform:scaleX(1.0041);">ProductMix</span>
<span class="t" style="font-size:9px;color:#555;top:497px;left:254px;transform-origin:0 0;transform:scaleX(0.9708);">Alloc1</span>
<span class="t" style="font-size:9px;color:#217346;top:497px;font-weight:bold;left:306.7px;transform-origin:0 0;transform:scaleX(0.9587);">Alloc2</span>
<span class="t" style="font-size:9px;color:#555;top:497px;left:361.1px;transform-origin:0 0;transform:scaleX(0.9382);">Blend1</span>
<span class="t" style="font-size:9px;color:#555;top:497px;left:416.7px;transform-origin:0 0;transform:scaleX(0.9382);">Blend2</span>
<span class="t" style="font-size:9px;color:#555;top:497px;left:471.5px;transform-origin:0 0;transform:scaleX(0.9442);">Process</span>
<span class="t" style="font-size:9px;color:#555;top:497px;left:530.7px;transform-origin:0 0;transform:scaleX(0.9739);">Cutstock</span>
<span class="t" style="font-size:9.2px;color:#333;top:149px;left:465px;transform-origin:0 0;transform:scaleX(0.8601);">Set Objective:</span>
<span class="t" style="font-size:9.4px;color:#222;top:162px;left:467px;transform-origin:0 0;transform:scaleX(0.8879);">$G$36</span>
<span class="t" style="font-size:9.2px;color:#333;top:184px;left:466.6px;transform-origin:0 0;transform:scaleX(0.8968);">To:</span>
<span class="t" style="font-size:9.2px;color:#333;top:184px;left:493.6px;transform-origin:0 0;transform:scaleX(0.8180);">Max</span>
<span class="t" style="font-size:9.2px;color:#333;top:184px;left:533.3px;transform-origin:0 0;transform:scaleX(0.9249);">Min</span>
<span class="t" style="font-size:9.2px;color:#333;top:184px;left:575.4px;transform-origin:0 0;transform:scaleX(0.8638);">Value Of:</span>
<span class="t" style="font-size:9.4px;color:#444;top:184px;left:625.3px;transform-origin:0 0;transform:scaleX(0.9000);">0</span>
<span class="t" style="font-size:9.2px;color:#333;top:199px;left:465px;transform-origin:0 0;transform:scaleX(0.8338);">By Changing:</span>
<span class="t" style="font-size:9.2px;color:#222;top:213px;left:467px;transform-origin:0 0;transform:scaleX(0.8857);">$B$15:$F$17,$B$21:$F$23</span>
<span class="t" style="font-size:9.2px;color:#333;top:235px;left:465px;transform-origin:0 0;transform:scaleX(0.8831);">Subject To:</span>
<span class="t" style="font-size:9.2px;color:#222;top:248px;left:467px;transform-origin:0 0;transform:scaleX(0.9256);">$B$26:$F$26 &gt;= $B$27:$F$27</span>
<span class="t" style="font-size:9.2px;color:#222;top:261px;left:467px;transform-origin:0 0;transform:scaleX(0.9256);">$B$21:$F$23 &lt;= $B$31:$F$33</span>
<span class="t" style="font-size:9.2px;color:#222;top:273px;left:467px;transform-origin:0 0;transform:scaleX(0.9442);">$B$15:$F$17 = integer</span>
<span class="t" style="font-size:9.2px;color:#222;top:285px;left:467px;transform-origin:0 0;transform:scaleX(0.9340);">$B$17:$F$17 &lt;= $E$11</span>
<span class="t" style="font-size:9.2px;color:#222;top:298px;left:467px;transform-origin:0 0;transform:scaleX(0.9326);">$B$16:$F$16 &lt;= $E$10</span>
<span class="t" style="font-size:9.2px;color:#222;top:310px;left:467px;transform-origin:0 0;transform:scaleX(0.9300);">$B$15:$F$15 &lt;= $E$9</span>
<span class="t" style="font-size:9.3px;color:#333;top:366px;left:497.75px;transform-origin:0 0;transform:scaleX(1.0274) translateX(-50%);">Add</span>
<span class="t" style="font-size:9.3px;color:#333;top:366px;left:566.25px;transform-origin:0 0;transform:scaleX(0.9209) translateX(-50%);">Change</span>
<span class="t" style="font-size:9.3px;color:#333;top:366px;left:635.0px;transform-origin:0 0;transform:scaleX(0.9488) translateX(-50%);">Delete</span>
<span class="t" style="font-size:9.2px;color:#333;top:389px;left:465px;transform-origin:0 0;transform:scaleX(0.9030);">Solving Method:</span>
<span class="t" style="font-size:9.3px;color:#333;top:403px;left:468px;transform-origin:0 0;transform:scaleX(0.9037);">Simplex LP</span>
<span class="t" style="font-size:9.3px;color:#333;top:432px;left:515.0px;transform-origin:0 0;transform:scaleX(0.9400) translateX(-50%);">Reset All</span>
<span class="t" style="font-size:9.3px;color:#333;top:432px;left:618.9499999999999px;transform-origin:0 0;transform:scaleX(0.9307) translateX(-50%);">Examples</span>
<span class="t" style="font-size:9.3px;color:#333;top:458px;left:515.0px;transform-origin:0 0;transform:scaleX(0.9026) translateX(-50%);">Solve</span>
<span class="t" style="font-size:9.3px;color:#333;top:458px;left:618.9499999999999px;transform-origin:0 0;transform:scaleX(0.9829) translateX(-50%);">Options</span>
</body></html>
